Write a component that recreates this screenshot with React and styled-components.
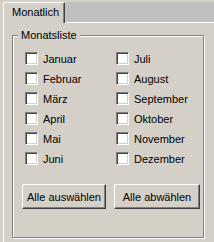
import React from 'react'
import styled, { createGlobalStyle } from 'styled-components'

const GlobalStyle = createGlobalStyle`
  html, body {
    margin: 0;
    padding: 0;
    background: #d4d0c8;
  }
  body {
    font-family: "Liberation Sans", Arial, sans-serif;
    font-size: 11px;
    color: #000;
  }
`

const Window = styled.div`
  width: 214px;
  height: 242px;
  overflow: hidden;
  background: #d4d0c8;
`

const TabStrip = styled.div`
  display: flex;
  align-items: flex-end;
  height: 23px;
`

const Gap = styled.div`
  width: 3px;
  align-self: stretch;
  border-bottom: 1px solid #d4d0c8;
`

const Tab = styled.div`
  box-sizing: border-box;
  width: 62px;
  height: 21px;
  padding: 3px 0 0 8px;
  background: #d4d0c8;
  border-left: 1px solid #fff;
  border-top: 1px solid #fff;
  border-right: 1px solid #404040;
  border-top-left-radius: 2px;
  border-top-right-radius: 1px;
  box-shadow: inset -1px 0 0 #808080;
  line-height: 13px;
  white-space: nowrap;
`

const Filler = styled.div`
  flex: 1;
  align-self: stretch;
  background: #c0c0c0;
  border-top: 2px solid #d4d0c8;
  border-bottom: 1px solid #fff;
`

const Panel = styled.div`
  margin-left: 3px;
  border-left: 1px solid #fff;
  padding: 12px 0 0 8px;
  height: 240px;
`

const GroupBox = styled.div`
  position: relative;
  box-sizing: border-box;
  width: 192px;
  height: 203px;
  border: 1px solid #808080;
  box-shadow: inset 1px 1px 0 #fff, 1px 1px 0 #fff;
`

const Legend = styled.span`
  position: absolute;
  top: -7px;
  left: 5px;
  padding: 0 3px;
  background: #d4d0c8;
  line-height: 13px;
`

const MonthGrid = styled.div`
  display: grid;
  grid-auto-flow: column;
  grid-template-columns: 91px 91px;
  grid-template-rows: repeat(6, 13px);
  row-gap: 7px;
  padding: 16px 0 0 12px;
`

const Month = styled.label`
  display: flex;
  align-items: center;
  height: 13px;
  white-space: nowrap;
`

const Box = styled.span`
  box-sizing: border-box;
  flex: none;
  width: 13px;
  height: 13px;
  background: #fff;
  border: 1px solid;
  border-color: #808080 #fff #fff #808080;
  box-shadow: inset 1px 1px 0 #404040, inset -1px -1px 0 #d4d0c8;
  margin-right: 5px;
`

const ButtonRow = styled.div`
  display: flex;
  gap: 8px;
  margin: 19px 0 0 9px;
`

const Button = styled.button`
  box-sizing: border-box;
  width: ${p => p.w}px;
  height: 25px;
  padding: 0;
  background: #d4d0c8;
  font-family: "Liberation Sans", Arial, sans-serif;
  font-size: 11px;
  color: #000;
  border: 1px solid;
  border-color: #fff #404040 #404040 #fff;
  box-shadow: inset -1px -1px 0 #808080;
  border-radius: 0;
`

const left = ['Januar', 'Februar', 'März', 'April', 'Mai', 'Juni']
const right = ['Juli', 'August', 'September', 'Oktober', 'November', 'Dezember']

export default function App() {
  return (
    <Window>
      <GlobalStyle />
      <TabStrip>
        <Gap />
        <Tab>Monatlich</Tab>
        <Filler />
      </TabStrip>
      <Panel>
        <GroupBox>
          <Legend>Monatsliste</Legend>
          <MonthGrid>
            {[...left, ...right].map(m => (
              <Month key={m}>
                <Box />
                {m}
              </Month>
            ))}
          </MonthGrid>
          <ButtonRow>
            <Button w={84}>Alle auswählen</Button>
            <Button w={86}>Alle abwählen</Button>
          </ButtonRow>
        </GroupBox>
      </Panel>
    </Window>
  )
}
